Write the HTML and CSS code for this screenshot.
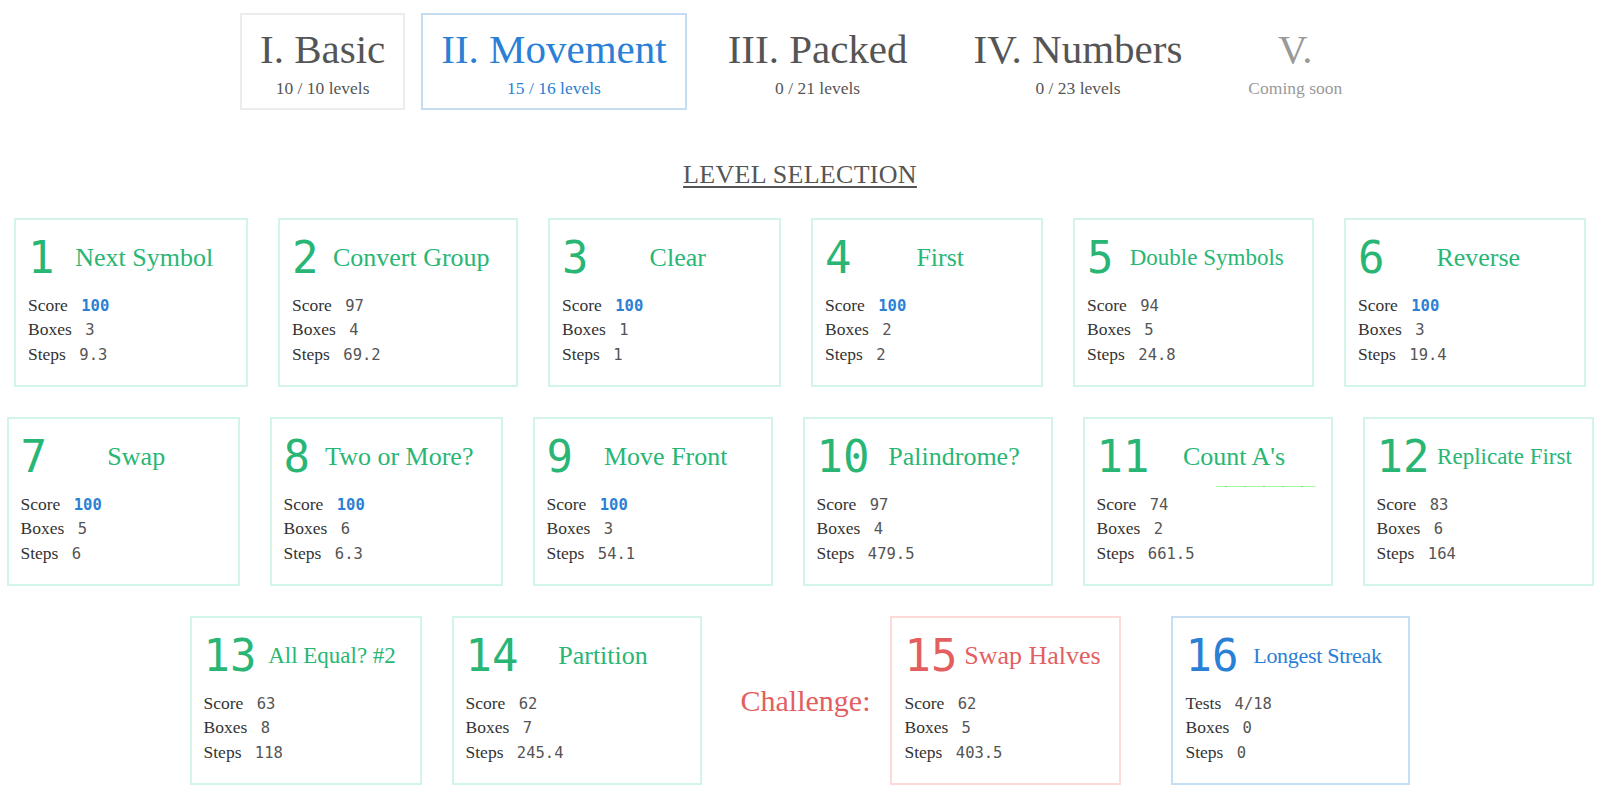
FILE: index.html
```html
<!DOCTYPE html>
<html lang="en">
<head>
    <meta charset="UTF-8">
    <title>Level Selection</title>
    <link rel="stylesheet" href="styles.css">
</head>
<body>
    <div class="page">
        <!-- Capítulos -->
        <nav class="tabs">
            <div class="tab">
                <div class="tab-title">I. Basic</div>
                <div class="tab-sub">10 / 10 levels</div>
            </div>
            <div class="tab tab-active">
                <div class="tab-title">II. Movement</div>
                <div class="tab-sub">15 / 16 levels</div>
            </div>
            <div class="tab tab-plain">
                <div class="tab-title">III. Packed</div>
                <div class="tab-sub">0 / 21 levels</div>
            </div>
            <div class="tab tab-plain">
                <div class="tab-title">IV. Numbers</div>
                <div class="tab-sub">0 / 23 levels</div>
            </div>
            <div class="tab tab-plain tab-soon">
                <div class="tab-title">V.</div>
                <div class="tab-sub">Coming soon</div>
            </div>
        </nav>

        <h2 class="heading">LEVEL SELECTION</h2>

        <div class="row row-1">
            <div class="card">
                <div class="card-head"><span class="num">1</span><span class="title">Next Symbol</span></div>
                <div class="stats">
                    <div>Score <span class="val best">100</span></div>
                    <div>Boxes <span class="val">3</span></div>
                    <div>Steps <span class="val">9.3</span></div>
                </div>
            </div>
            <div class="card">
                <div class="card-head"><span class="num">2</span><span class="title">Convert Group</span></div>
                <div class="stats">
                    <div>Score <span class="val">97</span></div>
                    <div>Boxes <span class="val">4</span></div>
                    <div>Steps <span class="val">69.2</span></div>
                </div>
            </div>
            <div class="card">
                <div class="card-head"><span class="num">3</span><span class="title">Clear</span></div>
                <div class="stats">
                    <div>Score <span class="val best">100</span></div>
                    <div>Boxes <span class="val">1</span></div>
                    <div>Steps <span class="val">1</span></div>
                </div>
            </div>
            <div class="card">
                <div class="card-head"><span class="num">4</span><span class="title">First</span></div>
                <div class="stats">
                    <div>Score <span class="val best">100</span></div>
                    <div>Boxes <span class="val">2</span></div>
                    <div>Steps <span class="val">2</span></div>
                </div>
            </div>
            <div class="card">
                <div class="card-head"><span class="num">5</span><span class="title title-small">Double Symbols</span></div>
                <div class="stats">
                    <div>Score <span class="val">94</span></div>
                    <div>Boxes <span class="val">5</span></div>
                    <div>Steps <span class="val">24.8</span></div>
                </div>
            </div>
            <div class="card">
                <div class="card-head"><span class="num">6</span><span class="title">Reverse</span></div>
                <div class="stats">
                    <div>Score <span class="val best">100</span></div>
                    <div>Boxes <span class="val">3</span></div>
                    <div>Steps <span class="val">19.4</span></div>
                </div>
            </div>
        </div>

        <div class="row row-2">
            <div class="card">
                <div class="card-head"><span class="num">7</span><span class="title">Swap</span></div>
                <div class="stats">
                    <div>Score <span class="val best">100</span></div>
                    <div>Boxes <span class="val">5</span></div>
                    <div>Steps <span class="val">6</span></div>
                </div>
            </div>
            <div class="card">
                <div class="card-head"><span class="num">8</span><span class="title">Two or More?</span></div>
                <div class="stats">
                    <div>Score <span class="val best">100</span></div>
                    <div>Boxes <span class="val">6</span></div>
                    <div>Steps <span class="val">6.3</span></div>
                </div>
            </div>
            <div class="card">
                <div class="card-head"><span class="num">9</span><span class="title">Move Front</span></div>
                <div class="stats">
                    <div>Score <span class="val best">100</span></div>
                    <div>Boxes <span class="val">3</span></div>
                    <div>Steps <span class="val">54.1</span></div>
                </div>
            </div>
            <div class="card">
                <div class="card-head"><span class="num">10</span><span class="title">Palindrome?</span></div>
                <div class="stats">
                    <div>Score <span class="val">97</span></div>
                    <div>Boxes <span class="val">4</span></div>
                    <div>Steps <span class="val">479.5</span></div>
                </div>
            </div>
            <div class="card">
                <div class="card-head"><span class="num">11</span><span class="title">Count A's</span></div>
                <div class="progress-line"></div>
                <div class="stats">
                    <div>Score <span class="val">74</span></div>
                    <div>Boxes <span class="val">2</span></div>
                    <div>Steps <span class="val">661.5</span></div>
                </div>
            </div>
            <div class="card">
                <div class="card-head"><span class="num">12</span><span class="title title-small">Replicate First</span></div>
                <div class="stats">
                    <div>Score <span class="val">83</span></div>
                    <div>Boxes <span class="val">6</span></div>
                    <div>Steps <span class="val">164</span></div>
                </div>
            </div>
        </div>

        <div class="row row-3">
            <div class="card">
                <div class="card-head"><span class="num">13</span><span class="title title-small">All Equal? #2</span></div>
                <div class="stats">
                    <div>Score <span class="val">63</span></div>
                    <div>Boxes <span class="val">8</span></div>
                    <div>Steps <span class="val">118</span></div>
                </div>
            </div>
            <div class="card">
                <div class="card-head"><span class="num">14</span><span class="title">Partition</span></div>
                <div class="stats">
                    <div>Score <span class="val">62</span></div>
                    <div>Boxes <span class="val">7</span></div>
                    <div>Steps <span class="val">245.4</span></div>
                </div>
            </div>
            <div class="challenge">Challenge:</div>
            <div class="card card-red">
                <div class="card-head"><span class="num">15</span><span class="title">Swap Halves</span></div>
                <div class="stats">
                    <div>Score <span class="val">62</span></div>
                    <div>Boxes <span class="val">5</span></div>
                    <div>Steps <span class="val">403.5</span></div>
                </div>
            </div>
            <div class="card card-blue">
                <div class="card-head"><span class="num">16</span><span class="title title-xsmall">Longest Streak</span></div>
                <div class="stats">
                    <div>Tests <span class="val">4/18</span></div>
                    <div>Boxes <span class="val">0</span></div>
                    <div>Steps <span class="val">0</span></div>
                </div>
            </div>
        </div>
    </div>
</body>
</html>
```

FILE: styles.css
```css
body {
    margin: 0;
    padding: 0;
    background: #fff;
    color: #333;
    font-family: 'Liberation Serif', 'Times New Roman', serif;
}

.page {
    width: 1600px;
    padding-top: 13px;
}

/* Capítulos */
.tabs {
    display: flex;
    gap: 16px;
    padding-left: 240px;
}

.tab {
    border: 2px solid #ececec;
    padding: 12px 18px 10px;
    text-align: center;
    color: #555;
}

.tab-active {
    border-color: #c4ddf3;
    color: #2a80d5;
}

.tab-plain {
    border-color: transparent;
    padding-left: 23px;
    padding-right: 23px;
}

.tab-soon {
    color: #999;
}

.tab-title {
    font-size: 41px;
    line-height: 44px;
}

.tab-sub {
    font-size: 17.5px;
    line-height: 20px;
    margin-top: 7px;
}

.heading {
    margin: 50px 0 28px;
    text-align: center;
    font-weight: normal;
    font-size: 26px;
    line-height: 30px;
    letter-spacing: 0.3px;
    color: #555;
    text-decoration: underline;
    text-decoration-thickness: 2px;
    text-underline-offset: 3px;
}

/* Grade dos níveis */
.row {
    display: grid;
    justify-content: center;
    column-gap: 30px;
    margin-bottom: 30px;
}

.row-1 {
    grid-template-columns: 234px 240px 233px 232px 241px 242px;
}

.row-2 {
    grid-template-columns: 233px 233px 240px 250px 250px 231px;
}

.row-3 {
    display: flex;
    column-gap: 0;
}

.row-3 .card:nth-child(1) { width: 232px; }
.row-3 .card:nth-child(2) { width: 250px; margin-left: 30px; }
.row-3 .card-red { width: 231px; }
.row-3 .card-blue { width: 239px; margin-left: 50px; }

.card {
    position: relative;
    box-sizing: border-box;
    height: 169px;
    border: 2px solid #d3f5e8;
    padding: 16px 12px 21px;
    color: #29b675;
}

.card-red {
    border-color: #ffd8d8;
    color: #e35f5f;
}

.card-blue {
    border-color: #c6def4;
    color: #2a80d5;
}

.card-head {
    display: flex;
    align-items: center;
    height: 44px;
}

.num {
    font-family: 'DejaVu Sans Mono', monospace;
    font-size: 44px;
    line-height: 44px;
}

.title {
    flex: 1;
    text-align: center;
    font-size: 26px;
    white-space: nowrap;
}

.title-small {
    font-size: 23px;
}

.title-xsmall {
    font-size: 22px;
    letter-spacing: -0.3px;
}

.stats {
    margin-top: 13.5px;
    font-size: 17.5px;
    line-height: 23.5px;
    color: #333;
}

.val {
    font-family: 'DejaVu Sans Mono', monospace;
    font-size: 15.5px;
    color: #555;
    margin-left: 9px;
}

.val.best {
    color: #2a80d5;
    font-weight: bold;
}

.progress-line {
    position: absolute;
    left: 131px;
    right: 16px;
    top: 67px;
    height: 1px;
    background: repeating-linear-gradient(90deg, #a6f7a6 0 9px, #7be07b 9px 11px, #a6f7a6 11px 19px);
}

.challenge {
    align-self: center;
    margin: 0 20px 0 39px;
    font-size: 30px;
    color: #e35f5f;
}
```
